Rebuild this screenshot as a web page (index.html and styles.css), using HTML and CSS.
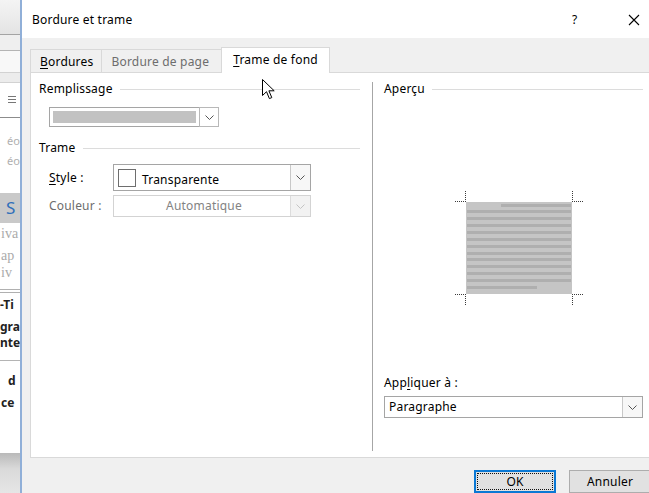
FILE: index.html
```html
<!DOCTYPE html>
<html lang="fr">
<head>
<meta charset="utf-8">
<title>Bordure et trame</title>
<link rel="stylesheet" href="styles.css">
</head>
<body>
<aside class="word">
  <div class="w-band w-top"></div>
  <div class="w-rule r-dark"></div>
  <div class="w-band w-b2"></div>
  <div class="w-rule r-mid"></div>
  <div class="w-band w-b3"></div>
  <div class="w-rule r-light"></div>
  <div class="w-band w-b4"></div>
  <div class="w-rule r-light"></div>
  <div class="w-menu">
    <svg width="20" height="34" viewBox="0 0 20 34"><path d="M8 13.5h8M8 16.5h8M8 19.5h8" stroke="#777" stroke-width="1"/></svg>
  </div>
  <div class="w-rule r-strong"></div>
  <div class="w-text w-styles">
    <div class="frag">éo</div>
    <div class="frag">éo</div>
  </div>
  <div class="w-sel"><span>S</span></div>
  <div class="w-text w-serif">
    <div class="frag f1">iva</div>
    <div class="frag f2">ap</div>
    <div class="frag f3">iv</div>
  </div>
  <div class="w-double"></div>
  <div class="w-text w-bold">
    <div class="frag b1">-Ti</div>
    <div class="frag b2">gra</div>
    <div class="frag b3">nte</div>
  </div>
  <div class="w-rule r-mid"></div>
  <div class="w-text w-bold w-low">
    <div class="frag c1">d</div>
    <div class="frag c2">ce</div>
  </div>
  <div class="w-foot"></div>
</aside>

<section class="dialog">
  <header class="titlebar">
    <span class="title">Bordure et trame</span>
    <span class="help">?</span>
    <span class="close">
      <svg width="12" height="12" viewBox="0 0 12 12"><path d="M1 1L11 11M11 1L1 11" stroke="#000" stroke-width="1.1"/></svg>
    </span>
  </header>

  <div class="sheet">
    <nav class="tabs">
      <div class="tab"><span><u>B</u>ordures</span></div>
      <div class="tab off"><span>Bordure de page</span></div>
      <div class="tab active"><span><u>T</u>rame de fond</span></div>
    </nav>

    <div class="panel">
      <div class="col-left">
        <div class="group-head"><span>Remplissage</span><i class="rule"></i></div>
        <div class="fill-select">
          <div class="swatch"></div>
          <div class="drop">
            <svg width="9" height="5" viewBox="0 0 9 5"><path d="M0.5 0.5L4.5 4.5L8.5 0.5" fill="none" stroke="#555" stroke-width="1"/></svg>
          </div>
        </div>

        <div class="group-head trame"><span>Trame</span><i class="rule"></i></div>
        <div class="field-row">
          <label class="lbl"><u>S</u>tyle :</label>
          <div class="combo style-combo">
            <span class="chip"></span>
            <span class="val">Transparente</span>
            <span class="drop">
              <svg width="9" height="5" viewBox="0 0 9 5"><path d="M0.5 0.5L4.5 4.5L8.5 0.5" fill="none" stroke="#555" stroke-width="1"/></svg>
            </span>
          </div>
        </div>
        <div class="field-row row-color">
          <label class="lbl disabled">Couleur :</label>
          <div class="combo color-combo">
            <span class="val">Automatique</span>
            <span class="drop">
              <svg width="9" height="5" viewBox="0 0 9 5"><path d="M0.5 0.5L4.5 4.5L8.5 0.5" fill="none" stroke="#c4c4c4" stroke-width="1"/></svg>
            </span>
          </div>
        </div>
      </div>

      <div class="vsep"></div>

      <div class="col-right">
        <div class="group-head"><span>Aperçu</span><i class="rule"></i></div>
        <svg class="preview" width="134" height="120" viewBox="0 0 134 120">
          <rect x="14" y="14" width="106" height="92" fill="#c5c5c5"/>
          <g fill="#afafaf">
            <rect x="49" y="16" width="70" height="3"/>
            <rect x="15" y="22" width="104" height="3"/>
            <rect x="15" y="29" width="104" height="3"/>
            <rect x="15" y="36" width="104" height="3"/>
            <rect x="15" y="43" width="104" height="3"/>
            <rect x="15" y="50" width="104" height="3"/>
            <rect x="15" y="57" width="104" height="3"/>
            <rect x="15" y="64" width="104" height="3"/>
            <rect x="15" y="70" width="104" height="3"/>
            <rect x="15" y="77" width="104" height="3"/>
            <rect x="15" y="84" width="104" height="3"/>
            <rect x="15" y="91" width="104" height="3"/>
            <rect x="15" y="98" width="70" height="3"/>
          </g>
          <g stroke="#3a3a3a" stroke-width="1" stroke-dasharray="1 1" fill="none">
            <path d="M3 13.5H14M13.5 3V14"/>
            <path d="M120 13.5H131M120.5 3V14"/>
            <path d="M3 106.5H14M13.5 106V117"/>
            <path d="M120 106.5H131M120.5 106V117"/>
          </g>
        </svg>
        <label class="apply-lbl">App<u>l</u>iquer à :</label>
        <div class="combo apply-combo">
          <span class="val">Paragraphe</span>
          <span class="drop">
            <svg width="9" height="5" viewBox="0 0 9 5"><path d="M0.5 0.5L4.5 4.5L8.5 0.5" fill="none" stroke="#555" stroke-width="1"/></svg>
          </span>
        </div>
      </div>
    </div>

    <footer class="buttons">
      <button class="btn default">OK</button>
      <button class="btn">Annuler</button>
    </footer>
  </div>
</section>

<svg class="pointer" width="14" height="22" viewBox="0 0 14 22">
  <path d="M0.5 0.5V16.5L4.5 12.7L7.4 19.6L9.8 18.6L6.9 11.8H12.2Z" fill="#fff" stroke="#000" stroke-width="1" stroke-linejoin="round"/>
</svg>
</body>
</html>
```

FILE: styles.css
```css
* { box-sizing: border-box; }

html, body { margin: 0; padding: 0; }

body {
  width: 649px;
  height: 493px;
  overflow: hidden;
  display: flex;
  position: relative;
  background: #fff;
  color: #000;
  font-family: "Noto Sans", "Open Sans", sans-serif;
  font-size: 12px;
  line-height: 16px;
  letter-spacing: 0.2px;
}

/* ---- Word window behind the dialog ---- */
.word {
  width: 20px;
  flex: none;
  display: flex;
  flex-direction: column;
  overflow: hidden;
  background: #fff;
  letter-spacing: 0;
}
.w-band { flex: none; }
.w-top { height: 34px; background: linear-gradient(#f4f4f4, #e4e4e4); }
.w-b2 { height: 15px; background: #efefef; }
.w-b3 { height: 21px; background: #f8f8f8; }
.w-b4 { height: 9px; background: #ececec; }
.w-rule { height: 1px; flex: none; background: #c6c6c6; }
.w-rule.r-dark { background: #a4a4a4; }
.w-rule.r-mid { background: #b4b4b4; }
.w-rule.r-light { background: #d2d2d2; }
.w-rule.r-strong { background: #8c8c8c; }
.w-menu { height: 34px; flex: none; }
.w-menu svg { display: block; }

.w-text { flex: none; white-space: nowrap; }
.frag { height: 17px; line-height: 17px; }
.w-styles { height: 75px; padding-top: 13px; color: #b0b0b0; font-size: 11px; }
.w-styles .frag { height: 20px; line-height: 20px; text-indent: 7px; }
.w-sel {
  height: 30px;
  flex: none;
  background: #c9c9c9;
  color: #2f6fba;
  font-size: 17px;
  line-height: 30px;
  padding-left: 6px;
}
.w-serif { height: 66px; padding-top: 2px; color: #aaa; font-family: "Liberation Serif", serif; font-size: 14px; }
.w-serif .f1 { text-indent: 1px; }
.w-serif .f2 { margin-top: 5px; text-indent: 1px; }
.w-serif .f3 { text-indent: 1px; }
.w-double { height: 4px; flex: none; border-top: 1px solid #b0b0b0; border-bottom: 1px solid #b0b0b0; }
.w-bold { height: 67px; padding-top: 4px; font-weight: 700; color: #222; }
.w-bold .frag { height: 16px; line-height: 16px; }
.w-bold .b2 { margin-top: 6px; }
.w-low { height: 92px; padding-top: 12px; }
.w-low .c1 { text-indent: 8px; }
.w-low .c2 { margin-top: 6px; text-indent: 1px; }
.w-foot { height: 40px; flex: none; background: linear-gradient(#b9b9b9, #dadada 40%, #e6e6e6); }

/* ---- Dialog ---- */
.dialog {
  flex: 1;
  display: flex;
  flex-direction: column;
  border-left: 2px solid #90afd8;
  min-width: 0;
}

.titlebar {
  height: 38px;
  flex: none;
  display: flex;
  align-items: center;
  padding: 2px 9px 0 10px;
  background: #fff;
}
.title { flex: 1; }
.help { width: 10px; margin-right: 46px; }
.close { width: 12px; height: 12px; }
.close svg { display: block; }

.sheet {
  flex: 1;
  display: flex;
  flex-direction: column;
  background: #f0f0f0;
  padding: 9px 0 0 8px;
}

.tabs {
  height: 25px;
  flex: none;
  display: flex;
  align-items: flex-end;
  position: relative;
  z-index: 1;
}
.tab {
  height: 23px;
  display: flex;
  align-items: center;
  padding: 1px 9px 0 9px;
  margin-right: -1px;
  border: 1px solid #d9d9d9;
  border-bottom: 0;
  background: #f0f0f0;
  white-space: nowrap;
}
.tab:first-child { padding-right: 8px; }
.tab.off { color: #6d6d6d; padding: 1px 12px 0 9px; }
.tab.active {
  height: 26px;
  margin-bottom: -1px;
  padding: 0 11px 1px 11px;
  background: #fff;
}
u { text-decoration-thickness: 1px; text-underline-offset: 2px; }

.panel {
  height: 386px;
  flex: none;
  display: flex;
  background: #fff;
  border: 1px solid #d9d9d9;
  border-right: 0;
}

.group-head {
  height: 16px;
  display: flex;
  align-items: center;
  gap: 7px;
  white-space: nowrap;
}
.group-head .rule { flex: 1; height: 1px; background: #dcdcdc; margin-top: 1px; }

/* left column: fill and pattern */
.col-left {
  width: 341px;
  flex: none;
  padding: 8px 12px 0 8px;
}

.fill-select {
  width: 170px;
  height: 20px;
  margin: 10px 0 0 10px;
  display: flex;
  border: 1px solid #a5a5a5;
  padding: 3px 0 3px 3px;
}
.fill-select .swatch { flex: 1; background: #c2c2c2; }
.fill-select .drop {
  width: 20px;
  margin: -4px -1px -4px 3px;
  border: 1px solid #b8b8b8;
  background: #fff;
  display: flex;
  align-items: center;
  justify-content: center;
}

.group-head.trame { margin-top: 13px; }

.field-row {
  display: flex;
  align-items: center;
  margin: 8px 0 0 10px;
}
.field-row.row-color { margin-top: 4px; }
.lbl { width: 64px; flex: none; }
.lbl.disabled { color: #6d6d6d; }

.combo {
  display: flex;
  align-items: center;
  background: #fff;
  white-space: nowrap;
}
.combo .drop {
  width: 20px;
  align-self: stretch;
  margin-left: auto;
  display: flex;
  align-items: center;
  justify-content: center;
  border-left: 1px solid #c8c8c8;
}
.combo .drop svg { display: block; }

.style-combo {
  width: 198px;
  height: 27px;
  border: 1px solid #a5a5a5;
  padding-left: 4px;
}
.style-combo .chip {
  width: 18px;
  height: 18px;
  border: 1px solid #6e6e6e;
  background: #fff;
  flex: none;
}
.style-combo .val { margin: 5px 0 0 6px; }
.style-combo .drop { background: #f7f7f7; }

.color-combo {
  width: 198px;
  height: 22px;
  border: 1px solid #d3d3d3;
  color: #838383;
}
.color-combo .val { flex: 1; text-align: center; padding-left: 4px; }
.color-combo .drop { margin-left: 0; background: #f2f2f2; border-left-color: #dcdcdc; }

.vsep {
  width: 1px;
  flex: none;
  margin: 9px 0 6px;
  background: #a6a6a6;
}

/* right column: preview and scope */
.col-right {
  flex: 1;
  display: flex;
  flex-direction: column;
  padding: 8px 7px 0 11px;
}
.preview { display: block; margin: 91px 0 0 68px; }
.apply-lbl { margin-top: 67px; height: 16px; }
.apply-combo {
  width: 259px;
  height: 22px;
  margin-top: 5px;
  border: 1px solid #a5a5a5;
  padding-left: 4px;
}
.apply-combo .drop { background: #f7f7f7; }

/* footer buttons */
.buttons {
  flex: 1;
  display: flex;
  gap: 13px;
  padding: 12px 0 0 444px;
}
.btn {
  width: 82px;
  height: 23px;
  flex: none;
  padding: 0;
  font: inherit;
  letter-spacing: inherit;
  color: #000;
  background: #e1e1e1;
  border: 1px solid #adadad;
}
.btn.default {
  border: 2px solid #0a78d4;
  outline: 1px dotted #111;
  outline-offset: -4px;
}

.pointer {
  position: absolute;
  left: 262px;
  top: 79px;
}
```
